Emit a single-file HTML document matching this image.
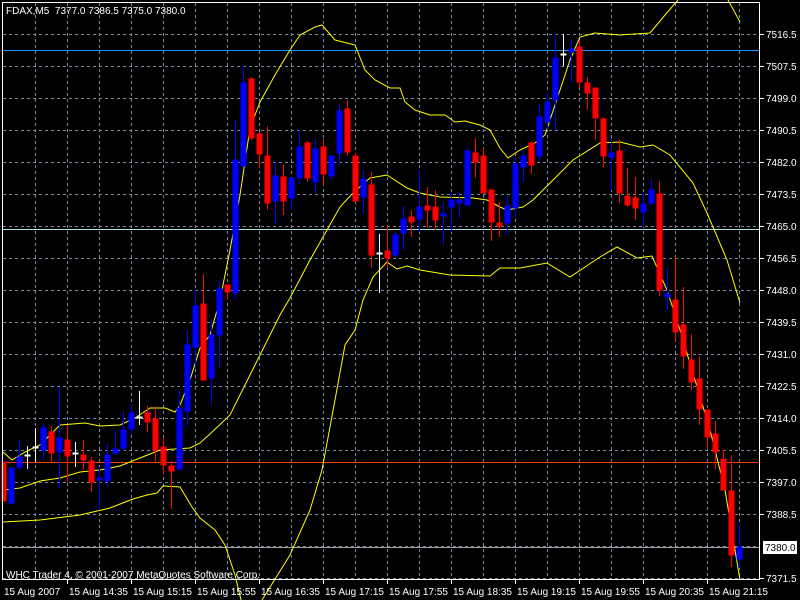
<!DOCTYPE html>
<html><head><meta charset="utf-8"><style>
html,body{margin:0;padding:0;background:#000;width:800px;height:600px;overflow:hidden}
svg{display:block}
text{font-family:"Liberation Sans",sans-serif;font-size:10px;fill:#fff}
</style></head><body>
<svg width="800" height="600" viewBox="0 0 800 600" xmlns="http://www.w3.org/2000/svg" shape-rendering="crispEdges">
<rect width="800" height="600" fill="#000"/>
<g stroke="#778899" stroke-width="1" stroke-dasharray="3,3">
<path d="M3 34.5H760M3 66.5H760M3 98.5H760M3 130.5H760M3 162.5H760M3 194.5H760M3 226.5H760M3 258.5H760M3 290.5H760M3 322.5H760M3 354.5H760M3 386.5H760M3 418.5H760M3 450.5H760M3 482.5H760M3 514.5H760M3 546.5H760M3 578.5H760"/>
<path d="M35.5 3V580M67.5 3V580M99.5 3V580M131.5 3V580M163.5 3V580M195.5 3V580M227.5 3V580M259.5 3V580M291.5 3V580M323.5 3V580M355.5 3V580M387.5 3V580M419.5 3V580M451.5 3V580M483.5 3V580M515.5 3V580M547.5 3V580M579.5 3V580M611.5 3V580M643.5 3V580M675.5 3V580M707.5 3V580M739.5 3V580"/>
</g>
<path d="M3 50.5H760" stroke="#1e90ff"/>
<path d="M3 229.5H760" stroke="#a8e4ee"/>
<path d="M3 462.5H760" stroke="#ff3c00"/>
<path d="M3 547.5H760" stroke="#a0a0a0"/>
<g fill="none" stroke="#ffff00" stroke-width="1" shape-rendering="auto">
<polyline points="3,452 12,460 25,452 40,445 60,425 85,423 100,426 120,425 135,418 150,408 165,408 175,412 180,405 190,380 200,348 210,335 220,300 230,250 240,195 250,128 260,102 275,75 290,50 300,35 315,27 322,25 335,40 355,45 365,70 375,80 390,88 400,88 405,102 415,110 430,115 445,115 455,122 465,121 480,125 490,130 500,148 508,158 520,150 535,143 545,135 560,90 570,60 580,37 595,33 620,35 650,33 665,15 678,0"/>
<polyline points="728,0 740,22"/>
<polyline points="3,490 20,488 40,481 60,478 80,472 100,470 120,466 140,458 160,450 175,449 190,448 200,443 210,434 230,415 250,375 265,345 280,315 290,298 310,260 327,230 340,207 353,193 370,178 387,175 407,188 420,193 440,197 473,198 487,200 500,207 507,210 523,207 533,200 550,183 573,160 600,143 620,142 640,147 653,145 670,155 693,183 707,213 727,260 740,303"/>
<polyline points="3,522 40,520 80,515 110,508 133,499 147,495 157,493 163,486 180,487 192,507 200,518 215,530 225,545 235,575 241,600"/>
<polyline points="262,600 290,555 310,510 322,470 335,400 345,345 355,330 363,300 373,277 387,262 397,269 407,266 420,270 450,275 490,276 500,268 520,268 547,263 570,277 600,257 617,247 637,258 652,256 667,290 680,330 695,380 710,430 725,490 740,580"/>
</g>
<g stroke-width="1">
<g stroke="#0000ff" fill="#0000ff">
<line x1="11.5" y1="468" x2="11.5" y2="505"/><rect x="9" y="468" width="5" height="35"/>
<line x1="19.5" y1="440" x2="19.5" y2="470"/><rect x="17" y="457" width="5" height="10"/>
<line x1="43.5" y1="423" x2="43.5" y2="460"/><rect x="41" y="428" width="5" height="22"/>
<line x1="59.5" y1="387" x2="59.5" y2="488"/><rect x="57" y="438" width="5" height="14"/>
<line x1="99.5" y1="467" x2="99.5" y2="510"/><rect x="97" y="478" width="5" height="2"/>
<line x1="107.5" y1="444" x2="107.5" y2="487"/><rect x="105" y="455" width="5" height="26"/>
<line x1="115.5" y1="430" x2="115.5" y2="455"/><rect x="113" y="449" width="5" height="4"/>
<line x1="123.5" y1="411" x2="123.5" y2="451"/><rect x="121" y="430" width="5" height="18"/>
<line x1="131.5" y1="404" x2="131.5" y2="435"/><rect x="129" y="413" width="5" height="16"/>
<line x1="179.5" y1="390" x2="179.5" y2="470"/><rect x="177" y="408" width="5" height="61"/>
<line x1="187.5" y1="330" x2="187.5" y2="427"/><rect x="185" y="345" width="5" height="66"/>
<line x1="195.5" y1="290" x2="195.5" y2="367"/><rect x="193" y="306" width="5" height="41"/>
<line x1="211.5" y1="320" x2="211.5" y2="405"/><rect x="209" y="335" width="5" height="43"/>
<line x1="219.5" y1="281" x2="219.5" y2="367"/><rect x="217" y="289" width="5" height="46"/>
<line x1="235.5" y1="120" x2="235.5" y2="299"/><rect x="233" y="160" width="5" height="133"/>
<line x1="243.5" y1="66" x2="243.5" y2="167"/><rect x="241" y="83" width="5" height="83"/>
<line x1="275.5" y1="162" x2="275.5" y2="224"/><rect x="273" y="176" width="5" height="25"/>
<line x1="291.5" y1="178" x2="291.5" y2="210"/><rect x="289" y="178" width="5" height="20"/>
<line x1="299.5" y1="130" x2="299.5" y2="184"/><rect x="297" y="147" width="5" height="31"/>
<line x1="315.5" y1="139" x2="315.5" y2="193"/><rect x="313" y="149" width="5" height="33"/>
<line x1="331.5" y1="156" x2="331.5" y2="180"/><rect x="329" y="156" width="5" height="20"/>
<line x1="339.5" y1="104" x2="339.5" y2="165"/><rect x="337" y="111" width="5" height="42"/>
<line x1="363.5" y1="170" x2="363.5" y2="214"/><rect x="361" y="179" width="5" height="18"/>
<line x1="395.5" y1="232" x2="395.5" y2="258"/><rect x="393" y="235" width="5" height="20"/>
<line x1="403.5" y1="206" x2="403.5" y2="250"/><rect x="401" y="219" width="5" height="14"/>
<line x1="419.5" y1="170" x2="419.5" y2="232"/><rect x="417" y="207" width="5" height="12"/>
<line x1="443.5" y1="202" x2="443.5" y2="245"/><rect x="441" y="214" width="5" height="2"/>
<line x1="451.5" y1="192" x2="451.5" y2="232"/><rect x="449" y="200" width="5" height="7"/>
<line x1="459.5" y1="192" x2="459.5" y2="218"/><rect x="457" y="200" width="5" height="3"/>
<line x1="467.5" y1="147" x2="467.5" y2="205"/><rect x="465" y="151" width="5" height="54"/>
<line x1="507.5" y1="196" x2="507.5" y2="235"/><rect x="505" y="206" width="5" height="17"/>
<line x1="515.5" y1="157" x2="515.5" y2="218"/><rect x="513" y="164" width="5" height="44"/>
<line x1="523.5" y1="150" x2="523.5" y2="182"/><rect x="521" y="156" width="5" height="11"/>
<line x1="539.5" y1="105" x2="539.5" y2="161"/><rect x="537" y="117" width="5" height="39"/>
<line x1="547.5" y1="93" x2="547.5" y2="130"/><rect x="545" y="102" width="5" height="20"/>
<line x1="555.5" y1="34" x2="555.5" y2="130"/><rect x="553" y="58" width="5" height="42"/>
<line x1="571.5" y1="39" x2="571.5" y2="82"/><rect x="569" y="49" width="5" height="3"/>
<line x1="611.5" y1="138" x2="611.5" y2="190"/><rect x="609" y="153" width="5" height="4"/>
<line x1="643.5" y1="193" x2="643.5" y2="227"/><rect x="641" y="204" width="5" height="8"/>
<line x1="651.5" y1="179" x2="651.5" y2="205"/><rect x="649" y="190" width="5" height="13"/>
<line x1="667.5" y1="268" x2="667.5" y2="310"/><rect x="665" y="294" width="5" height="3"/>
<line x1="739.5" y1="523" x2="739.5" y2="568"/><rect x="737" y="547" width="5" height="12"/>
</g>
<g stroke="#ff0000" fill="#ff0000">
<line x1="3.5" y1="462" x2="3.5" y2="501"/><rect x="2" y="462" width="4" height="39"/>
<line x1="51.5" y1="426" x2="51.5" y2="462"/><rect x="49" y="432" width="5" height="21"/>
<line x1="67.5" y1="425" x2="67.5" y2="482"/><rect x="65" y="440" width="5" height="16"/>
<line x1="83.5" y1="440" x2="83.5" y2="470"/><rect x="81" y="455" width="5" height="5"/>
<line x1="91.5" y1="457" x2="91.5" y2="492"/><rect x="89" y="461" width="5" height="21"/>
<line x1="147.5" y1="406" x2="147.5" y2="432"/><rect x="145" y="413" width="5" height="9"/>
<line x1="155.5" y1="406" x2="155.5" y2="462"/><rect x="153" y="419" width="5" height="31"/>
<line x1="163.5" y1="438" x2="163.5" y2="473"/><rect x="161" y="447" width="5" height="18"/>
<line x1="171.5" y1="461" x2="171.5" y2="509"/><rect x="169" y="466" width="5" height="5"/>
<line x1="203.5" y1="274" x2="203.5" y2="380"/><rect x="201" y="304" width="5" height="76"/>
<line x1="227.5" y1="285" x2="227.5" y2="300"/><rect x="225" y="285" width="5" height="7"/>
<line x1="251.5" y1="77" x2="251.5" y2="140"/><rect x="249" y="79" width="5" height="59"/>
<line x1="259.5" y1="132" x2="259.5" y2="168"/><rect x="257" y="134" width="5" height="20"/>
<line x1="267.5" y1="126" x2="267.5" y2="210"/><rect x="265" y="156" width="5" height="47"/>
<line x1="283.5" y1="164" x2="283.5" y2="215"/><rect x="281" y="177" width="5" height="24"/>
<line x1="307.5" y1="141" x2="307.5" y2="182"/><rect x="305" y="143" width="5" height="35"/>
<line x1="323.5" y1="139" x2="323.5" y2="185"/><rect x="321" y="147" width="5" height="27"/>
<line x1="347.5" y1="100" x2="347.5" y2="156"/><rect x="345" y="109" width="5" height="43"/>
<line x1="355.5" y1="153" x2="355.5" y2="202"/><rect x="353" y="156" width="5" height="45"/>
<line x1="371.5" y1="172" x2="371.5" y2="268"/><rect x="369" y="185" width="5" height="70"/>
<line x1="387.5" y1="226" x2="387.5" y2="268"/><rect x="385" y="251" width="5" height="7"/>
<line x1="411.5" y1="210" x2="411.5" y2="237"/><rect x="409" y="217" width="5" height="5"/>
<line x1="427.5" y1="187" x2="427.5" y2="228"/><rect x="425" y="206" width="5" height="4"/>
<line x1="435.5" y1="190" x2="435.5" y2="230"/><rect x="433" y="207" width="5" height="13"/>
<line x1="475.5" y1="138" x2="475.5" y2="178"/><rect x="473" y="153" width="5" height="9"/>
<line x1="483.5" y1="148" x2="483.5" y2="193"/><rect x="481" y="156" width="5" height="37"/>
<line x1="491.5" y1="189" x2="491.5" y2="241"/><rect x="489" y="190" width="5" height="32"/>
<line x1="499.5" y1="202" x2="499.5" y2="237"/><rect x="497" y="223" width="5" height="3"/>
<line x1="531.5" y1="141" x2="531.5" y2="174"/><rect x="529" y="143" width="5" height="22"/>
<line x1="579.5" y1="40" x2="579.5" y2="88"/><rect x="577" y="47" width="5" height="35"/>
<line x1="587.5" y1="77" x2="587.5" y2="110"/><rect x="585" y="83" width="5" height="10"/>
<line x1="595.5" y1="88" x2="595.5" y2="140"/><rect x="593" y="88" width="5" height="30"/>
<line x1="603.5" y1="117" x2="603.5" y2="167"/><rect x="601" y="119" width="5" height="37"/>
<line x1="619.5" y1="139" x2="619.5" y2="203"/><rect x="617" y="151" width="5" height="42"/>
<line x1="627.5" y1="168" x2="627.5" y2="207"/><rect x="625" y="196" width="5" height="9"/>
<line x1="635.5" y1="177" x2="635.5" y2="220"/><rect x="633" y="198" width="5" height="10"/>
<line x1="659.5" y1="181" x2="659.5" y2="296"/><rect x="657" y="194" width="5" height="96"/>
<line x1="675.5" y1="257" x2="675.5" y2="341"/><rect x="673" y="300" width="5" height="32"/>
<line x1="683.5" y1="287" x2="683.5" y2="369"/><rect x="681" y="325" width="5" height="31"/>
<line x1="691.5" y1="334" x2="691.5" y2="390"/><rect x="689" y="360" width="5" height="22"/>
<line x1="699.5" y1="357" x2="699.5" y2="425"/><rect x="697" y="379" width="5" height="30"/>
<line x1="707.5" y1="410" x2="707.5" y2="449"/><rect x="705" y="410" width="5" height="27"/>
<line x1="715.5" y1="421" x2="715.5" y2="469"/><rect x="713" y="434" width="5" height="18"/>
<line x1="723.5" y1="450" x2="723.5" y2="490"/><rect x="721" y="459" width="5" height="31"/>
<line x1="731.5" y1="455" x2="731.5" y2="567"/><rect x="729" y="491" width="5" height="64"/>
</g>
<g stroke="#ffffff" fill="#ffffff">
<line x1="27.5" y1="446" x2="27.5" y2="469"/><rect x="25" y="455" width="5" height="1"/>
<line x1="35.5" y1="428" x2="35.5" y2="462"/><rect x="33" y="447" width="5" height="1"/>
<line x1="75.5" y1="442" x2="75.5" y2="467"/><rect x="73" y="453" width="5" height="1"/>
<line x1="139.5" y1="391" x2="139.5" y2="425"/><rect x="137" y="417" width="5" height="1"/>
<line x1="379.5" y1="234" x2="379.5" y2="293"/><rect x="377" y="253" width="5" height="1"/>
<line x1="563.5" y1="34" x2="563.5" y2="66"/><rect x="561" y="54" width="5" height="1"/>
</g>
</g>
<rect x="2.5" y="2.5" width="757" height="577" fill="none" stroke="#fff"/>
<g stroke="#fff"><path d="M760 34.5h4M760 66.5h4M760 98.5h4M760 130.5h4M760 162.5h4M760 194.5h4M760 226.5h4M760 258.5h4M760 290.5h4M760 322.5h4M760 354.5h4M760 386.5h4M760 418.5h4M760 450.5h4M760 482.5h4M760 514.5h4M760 578.5h4"/>
<path d="M67.5 580v4M131.5 580v4M195.5 580v4M259.5 580v4M323.5 580v4M387.5 580v4M451.5 580v4M515.5 580v4M579.5 580v4M643.5 580v4M707.5 580v4"/></g>
<text x="6" y="14" xml:space="preserve">FDAX,M5  7377.0 7386.5 7375.0 7380.0</text>
<text x="6" y="578">WHC Trader 4, © 2001-2007 MetaQuotes Software Corp.</text>
<g>
<text x="766" y="38">7516.5</text><text x="766" y="70">7507.5</text><text x="766" y="102">7499.0</text><text x="766" y="134">7490.5</text><text x="766" y="166">7482.0</text><text x="766" y="198">7473.5</text><text x="766" y="230">7465.0</text><text x="766" y="262">7456.5</text><text x="766" y="294">7448.0</text><text x="766" y="326">7439.5</text><text x="766" y="358">7431.0</text><text x="766" y="390">7422.5</text><text x="766" y="422">7414.0</text><text x="766" y="454">7405.5</text><text x="766" y="486">7397.0</text><text x="766" y="518">7388.5</text><text x="766" y="582">7371.5</text>
</g>
<rect x="763" y="541" width="34" height="13" fill="#fff"/>
<text x="765" y="551" style="fill:#000">7380.0</text>
<g>
<text x="4" y="595">15 Aug 2007</text><text x="69" y="595">15 Aug 14:35</text><text x="133" y="595">15 Aug 15:15</text><text x="197" y="595">15 Aug 15:55</text><text x="261" y="595">15 Aug 16:35</text><text x="325" y="595">15 Aug 17:15</text><text x="389" y="595">15 Aug 17:55</text><text x="453" y="595">15 Aug 18:35</text><text x="517" y="595">15 Aug 19:15</text><text x="581" y="595">15 Aug 19:55</text><text x="645" y="595">15 Aug 20:35</text><text x="709" y="595">15 Aug 21:15</text>
</g>
</svg>
</body></html>
